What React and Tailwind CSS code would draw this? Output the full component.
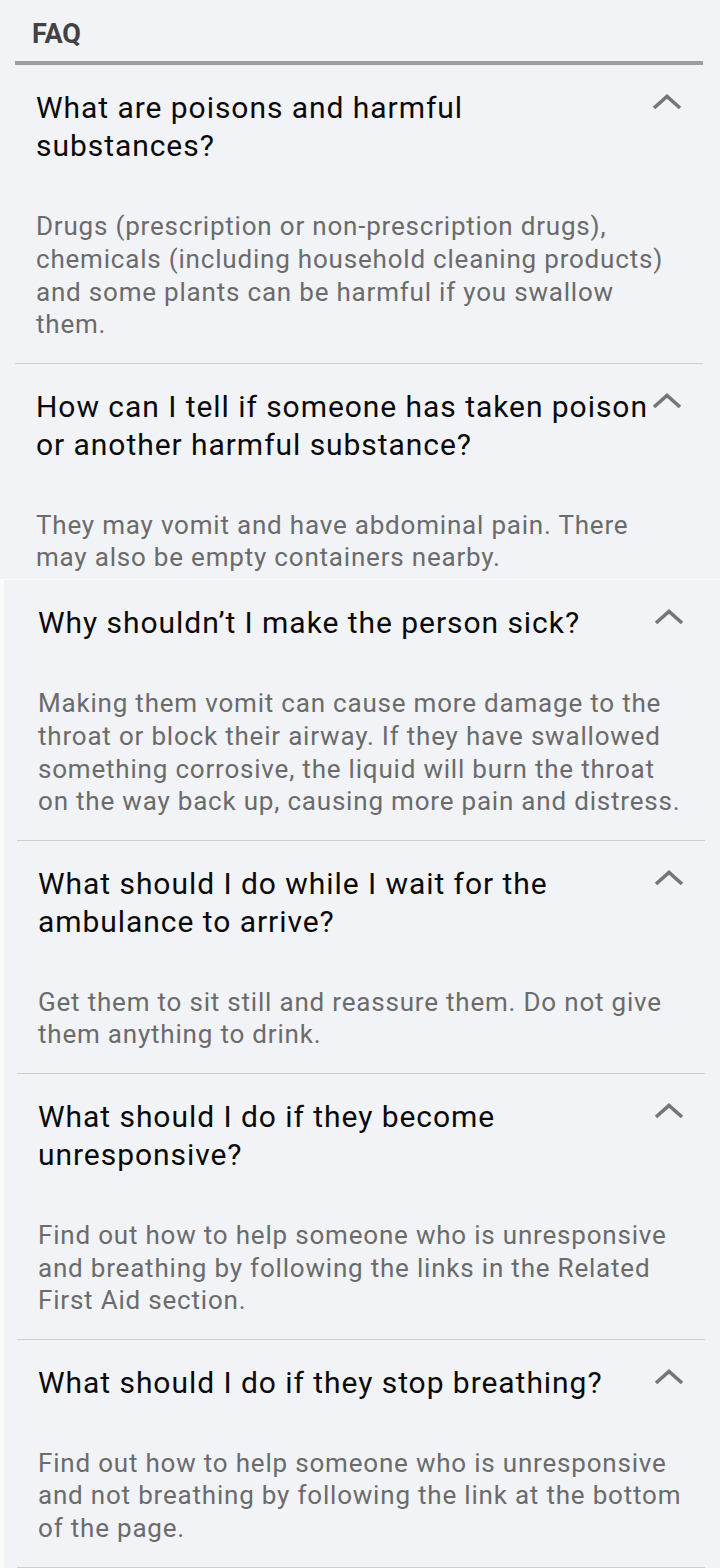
import React from 'react';

const topItems = [
  {
    q: ['What are poisons and harmful', 'substances?'],
    a: [
      'Drugs (prescription or non-prescription drugs),',
      'chemicals (including household cleaning products)',
      'and some plants can be harmful if you swallow',
      'them.',
    ],
    divider: true,
  },
  {
    q: ['How can I tell if someone has taken poison', 'or another harmful substance?'],
    a: ['They may vomit and have abdominal pain. There', 'may also be empty containers nearby.'],
    divider: false,
  },
];

const bottomItems = [
  {
    q: ['Why shouldn\u2019t I make the person sick?'],
    a: [
      'Making them vomit can cause more damage to the',
      'throat or block their airway. If they have swallowed',
      'something corrosive, the liquid will burn the throat',
      'on the way back up, causing more pain and distress.',
    ],
  },
  {
    q: ['What should I do while I wait for the', 'ambulance to arrive?'],
    a: ['Get them to sit still and reassure them. Do not give', 'them anything to drink.'],
  },
  {
    q: ['What should I do if they become', 'unresponsive?'],
    a: [
      'Find out how to help someone who is unresponsive',
      'and breathing by following the links in the Related',
      'First Aid section.',
    ],
  },
  {
    q: ['What should I do if they stop breathing?'],
    a: [
      'Find out how to help someone who is unresponsive',
      'and not breathing by following the link at the bottom',
      'of the page.',
    ],
  },
];

function Chevron() {
  return (
    <svg width="30" height="18" viewBox="0 0 30 18" className="shrink-0 mt-[4px]">
      <polyline points="2,15 15,3.5 28,15" fill="none" stroke="#767676" strokeWidth="3.6" />
    </svg>
  );
}

function FaqItem({ item, divider = true }) {
  return (
    <div className={divider ? 'border-b border-[#cfcfd2]' : ''}>
      <div className="pt-[24px] pl-[21px] pr-[21px] pb-[21.5px]">
        <div className="flex items-start">
          <div className="flex-1 min-w-0 text-[30px] leading-[38px] tracking-[0.95px] text-[#0a0a0a] whitespace-nowrap">
            {item.q.map((line, i) => (
              <div key={i}>{line}</div>
            ))}
          </div>
          <Chevron />
        </div>
        <div className="mt-[45px] text-[26px] leading-[32.8px] tracking-[0.8px] text-[#6b6b6b] whitespace-nowrap">
          {item.a.map((line, i) => (
            <div key={i}>{line}</div>
          ))}
        </div>
      </div>
    </div>
  );
}

export default function App() {
  return (
    <div className="w-[720px] min-h-[1568px] bg-[#f2f3f7] font-['Roboto',sans-serif] overflow-hidden">
      {/* first screen */}
      <div className="h-[579px] pl-[15px] pr-[17px]">
        <div className="pt-[17px] pl-[17px] text-[27px] leading-[34px] font-bold text-[#424242]">FAQ</div>
        <div className="mt-[10px] h-[4px] bg-[#9d9d9d]" />
        <div>
          {topItems.map((item, i) => (
            <FaqItem key={i} item={item} divider={item.divider} />
          ))}
        </div>
      </div>

      {/* second screen */}
      <div className="border-t border-l-4 border-[#fbfbfc] pl-[13px] pr-[15px]">
        {bottomItems.map((item, i) => (
          <FaqItem key={i} item={item} />
        ))}
      </div>
    </div>
  );
}
